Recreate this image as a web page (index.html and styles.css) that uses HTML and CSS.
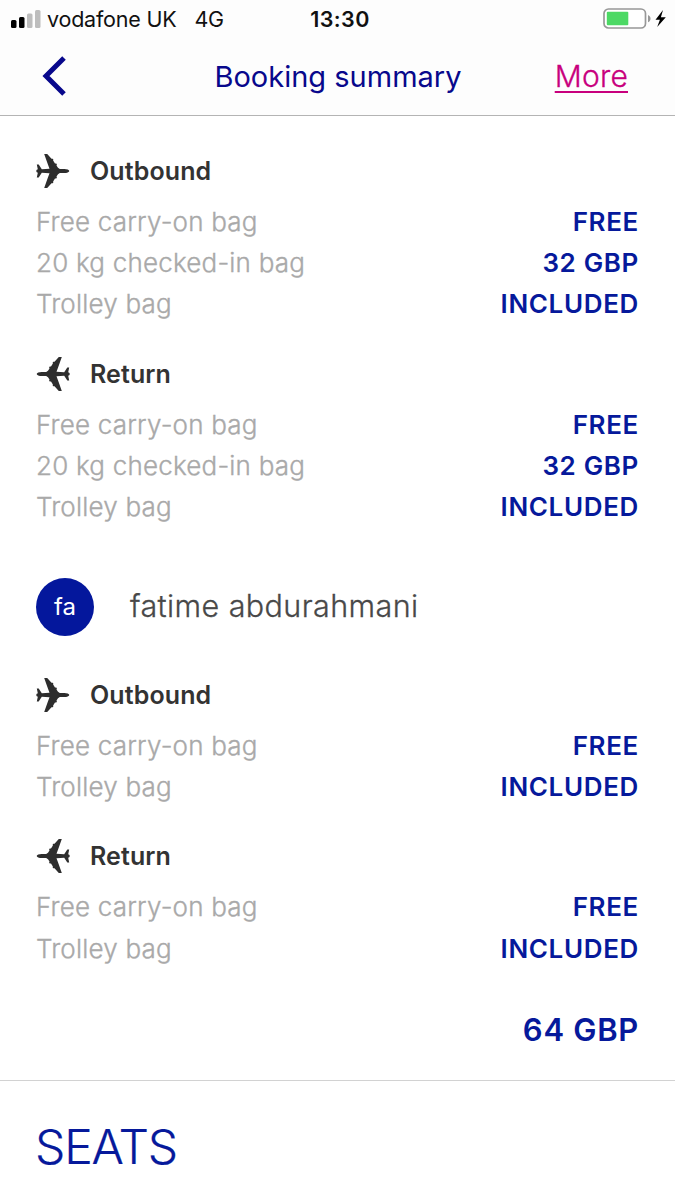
FILE: index.html
```html
<!DOCTYPE html>
<html lang="en">
<head>
<meta charset="utf-8">
<title>Booking summary</title>
<link rel="stylesheet" href="styles.css">
</head>
<body>
<svg class="defs" aria-hidden="true">
  <symbol id="plane" viewBox="0 0 34 36">
    <path d="M33.300 18c0 1.200-2.500 2.100-5 2.100h-4.500L22 21.200l-1.500 2.300.4 1-.6.900-1.300.2-1.900 2.800.3.900-.7.900-1.200.1-4.300 4.600H8.200l3-8.500 2.300-6.200-7.700-.5-3.100 4.700H.8l1-4.600-1.400-.9v-1.800l1.400-.9-1-4.600h1.900l3.100 4.700 7.700-.5-2.300-6.200-3-8.500h3l4.300 4.600 1.200.1.700.9-.3.900 1.900 2.800 1.300.2.600.9-.4 1 1.500 2.300 1.800 1.100h4.500c2.500 0 5 .9 5 2.100z"/>
  </symbol>
</svg>
<header class="top">
  <div class="status">
    <div class="carrier">
      <svg class="signal" width="30" height="18" viewBox="0 0 30 18">
        <rect x="0" y="10" width="5.500" height="8" rx="1.500" fill="#000"/>
        <rect x="8" y="7" width="5.500" height="11" rx="1.500" fill="#000"/>
        <rect x="16" y="3.500" width="5.500" height="14.500" rx="1.500" fill="#bdbdbd"/>
        <rect x="24" y="0" width="5.500" height="18" rx="1.500" fill="#bdbdbd"/>
      </svg>
      <span class="network">vodafone UK</span>
      <span class="tech">4G</span>
    </div>
    <span class="clock">13:30</span>
    <div class="power">
      <svg width="64" height="22" viewBox="0 0 64 22">
        <rect x="1" y="1" width="41.500" height="19" rx="4.500" fill="#fff" stroke="#989898" stroke-width="1.700"/>
        <rect x="3.800" y="3.800" width="21.500" height="13.400" rx="1" fill="#4cd964"/>
        <path d="M45 7c3.400 1.300 3.400 6 0 7.300z" fill="#989898"/>
        <path d="M60 2l-7.500 9.700h4.400L54.200 19l8.600-9.700h-4.900z" fill="#000"/>
      </svg>
    </div>
  </div>
  <nav class="bar">
    <svg class="back" width="25" height="40" viewBox="0 0 25 40"><path d="M22 2L4 20 22 38" fill="none" stroke="#08088c" stroke-width="5"/></svg>
    <h1 class="title">Booking summary</h1>
    <a class="more">More</a>
  </nav>
</header>
<main class="content">
  <section class="leg">
    <h2 class="leg-name"><svg class="plane"><use href="#plane"/></svg><span>Outbound</span></h2>
    <div class="row"><span class="item">Free carry-on bag</span><span class="price">FREE</span></div>
    <div class="row"><span class="item">20 kg checked-in bag</span><span class="price">32 GBP</span></div>
    <div class="row"><span class="item">Trolley bag</span><span class="price">INCLUDED</span></div>
  </section>
  <section class="leg">
    <h2 class="leg-name"><svg class="plane flip"><use href="#plane"/></svg><span>Return</span></h2>
    <div class="row"><span class="item">Free carry-on bag</span><span class="price">FREE</span></div>
    <div class="row"><span class="item">20 kg checked-in bag</span><span class="price">32 GBP</span></div>
    <div class="row"><span class="item">Trolley bag</span><span class="price">INCLUDED</span></div>
  </section>
  <div class="passenger"><span class="avatar">fa</span><span class="name">fatime abdurahmani</span></div>
  <section class="leg">
    <h2 class="leg-name"><svg class="plane"><use href="#plane"/></svg><span>Outbound</span></h2>
    <div class="row"><span class="item">Free carry-on bag</span><span class="price">FREE</span></div>
    <div class="row"><span class="item">Trolley bag</span><span class="price">INCLUDED</span></div>
  </section>
  <section class="leg">
    <h2 class="leg-name"><svg class="plane flip"><use href="#plane"/></svg><span>Return</span></h2>
    <div class="row"><span class="item">Free carry-on bag</span><span class="price">FREE</span></div>
    <div class="row"><span class="item">Trolley bag</span><span class="price">INCLUDED</span></div>
  </section>
  <div class="total">64 GBP</div>
</main>
<section class="seats"><h2 class="seats-title">SEATS</h2></section>
</body>
</html>
```

FILE: styles.css
```css
* { box-sizing: border-box; }
body {
  margin: 0;
  height: 1200px;
  overflow: hidden;
  background: #fff;
  color: #333;
  font-family: Inter, "Liberation Sans", sans-serif;
}
h1, h2 { margin: 0; }
span, a, h1 { white-space: nowrap; }
.defs { display: none; }
.top {
  height: 116px;
  background: #fdfdfd;
  border-bottom: 1px solid #b4b4b4;
}
.status {
  display: grid;
  grid-template-columns: 1fr auto 1fr;
  height: 37px;
  align-items: center;
  padding: 0 8px 0 11px;
  color: #111;
  font-size: 21.5px;
}
.carrier { display: flex; align-items: center; }
.network { margin-left: 6px; letter-spacing: -0.2px; }
.tech { margin-left: 18px; letter-spacing: -0.5px; }
.clock { padding-left: 2px; font-weight: 600; letter-spacing: 0.4px; }
.power { display: flex; justify-content: flex-end; }
.bar {
  display: grid;
  grid-template-columns: 1fr auto 1fr;
  height: 78px;
  align-items: center;
  padding: 0 47px 0 42px;
}
.title { padding-left: 6px; color: #08088c; font-size: 29px; font-weight: 400; }
.more {
  justify-self: end;
  color: #c8007d;
  font-size: 30px;
  font-weight: 300;
  letter-spacing: 0.2px;
  -webkit-text-stroke: 0.3px #c8007d;
  text-decoration: underline;
  text-decoration-thickness: 2px;
  text-underline-offset: 4px;
}
.content { height: 964px; padding: 34px 37px 0 36px; }
.leg { margin-bottom: 28.400px; }
.leg-name {
  display: flex;
  align-items: center;
  height: 42px;
  margin-bottom: 9px;
  font-size: 25px;
  font-weight: 600;
}
.leg-name span { letter-spacing: 0.1px; }
.plane { width: 34px; height: 36px; margin-right: 20px; fill: #2d2d2d; }
.flip { transform: scaleX(-1); }
.row {
  display: flex;
  align-items: center;
  justify-content: space-between;
  height: 41.200px;
  font-size: 26px;
}
.item {
  color: #a9a9a9;
  font-weight: 300;
  letter-spacing: 0.2px;
  -webkit-text-stroke: 0.35px #a9a9a9;
}
.price { margin-right: -1px; color: #06199b; font-weight: 600; letter-spacing: 0.65px; }
.passenger {
  display: flex;
  align-items: center;
  gap: 36px;
  height: 58px;
  margin: 50px 0 38px;
}
.avatar {
  display: flex;
  align-items: center;
  justify-content: center;
  width: 58px;
  height: 58px;
  border-radius: 50%;
  background: #04179c;
  color: #fff;
  font-size: 24px;
}
.name {
  padding-bottom: 2px;
  color: #484848;
  font-size: 30.500px;
  font-weight: 300;
  letter-spacing: 0.4px;
  -webkit-text-stroke: 0.3px #484848;
}
.total {
  margin: 41px -1px 0 0;
  color: #06199b;
  font-size: 31px;
  font-weight: 600;
  letter-spacing: 0.7px;
  line-height: 40px;
  text-align: right;
}
.seats { border-top: 1px solid #d2d2d2; padding: 36px 35px; }
.seats-title {
  color: #06199b;
  font-size: 48px;
  font-weight: 300;
  letter-spacing: -1.200px;
  line-height: 60px;
  -webkit-text-stroke: 0.2px #06199b;
}
```
